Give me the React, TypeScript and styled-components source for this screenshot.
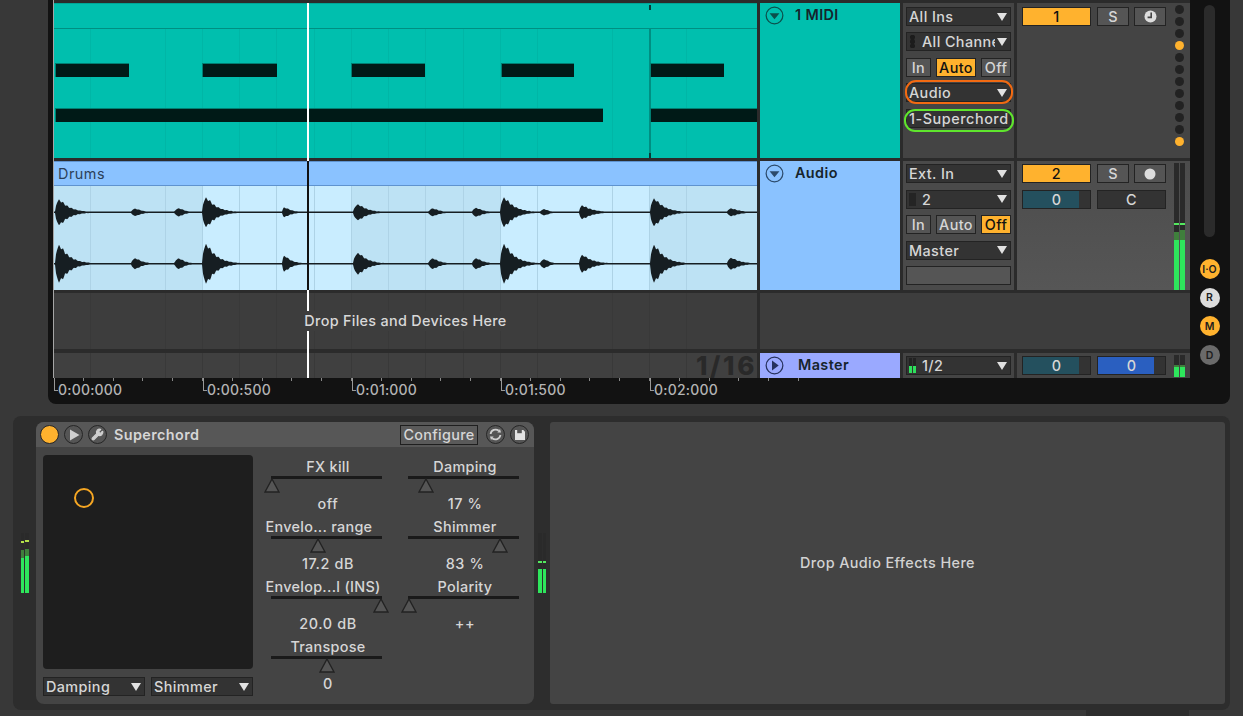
import React from 'react';
import styled, { createGlobalStyle } from 'styled-components';
import { Wrench } from 'lucide-react';

const FONT = '"Inter", "Liberation Sans", sans-serif';
const ORANGE = '#ffb22e';

// x positions are relative to the lane, top/bottom are half heights of the two channels
const HITS = [
  { x: 5, top: 13, bottom: 19, decay: 10, attack: 4 },
  { x: 81, top: 3.8, bottom: 5.5, decay: 7, attack: 4 },
  { x: 124.5, top: 4.2, bottom: 5.5, decay: 6, attack: 4 },
  { x: 152, top: 15, bottom: 20, decay: 10, attack: 4 },
  { x: 230, top: 5, bottom: 8, decay: 7, attack: 2 },
  { x: 304, top: 8, bottom: 11, decay: 9, attack: 5 },
  { x: 378.5, top: 4, bottom: 5.5, decay: 7, attack: 4 },
  { x: 422, top: 4.5, bottom: 5.5, decay: 7, attack: 4 },
  { x: 450, top: 15, bottom: 20, decay: 10, attack: 4 },
  { x: 490, top: 3.2, bottom: 4.5, decay: 5, attack: 4 },
  { x: 528, top: 7, bottom: 9, decay: 10, attack: 3 },
  { x: 600, top: 14, bottom: 19, decay: 10, attack: 4 },
  { x: 677, top: 4, bottom: 6, decay: 9, attack: 4 },
];

const envelope = (x: number, channel: 'top' | 'bottom') => {
  let v = 0.7;
  HITS.forEach((h) => {
    const dx = x - h.x;
    if (dx < -h.attack) return;
    const held = Math.max(0, dx - 2);
    const shape = dx < 0 ? Math.sqrt(1 + dx / h.attack) : Math.exp(-held / h.decay) * (0.88 + 0.12 * Math.cos(dx * 1.5));
    v = Math.max(v, h[channel] * shape);
  });
  return v;
};

const wavePath = (center: number, channel: 'top' | 'bottom') => {
  const up: string[] = [];
  const down: string[] = [];
  for (let x = 0; x <= 703; x += 1) {
    const v = envelope(x, channel);
    up.push(`${x},${(center - v).toFixed(1)}`);
    down.unshift(`${x},${(center + v).toFixed(1)}`);
  }
  return `M${up.join(' L')} L${down.join(' L')} Z`;
};

const GlobalStyle = createGlobalStyle`
  html, body {
    margin: 0;
    padding: 0;
    background: #383838;
    overflow: hidden;
  }
  * {
    box-sizing: border-box;
  }
`;

const Page = styled.div`
  width: 1243px;
  height: 716px;
  background: #383838;
  font-family: ${FONT};
  font-size: 14.4px;
  font-weight: 500;
  letter-spacing: 0.4px;
  color: #d6d6d6;
  overflow: hidden;
  position: relative;
`;

const Frame = styled.div`
  margin-left: 48px;
  width: 1182px;
  height: 404px;
  background: #121212;
  border-radius: 0 0 8px 8px;
  display: flex;
  padding-left: 5px;
`;

const Main = styled.div`
  position: relative;
  width: 1137px;
  display: flex;
  flex-direction: column;
`;

const Tracks = styled.div`
  height: 378px;
  background: #2b2b2b;
  border-left: 1px solid #a5a5a5;
  padding-top: 3px;
  display: flex;
  flex-direction: column;
  gap: 3px;
`;

const Row = styled.div<{ $height: number; $drop?: number }>`
  height: ${(p) => p.$height}px;
  margin-top: ${(p) => p.$drop ?? 0}px;
  display: grid;
  grid-template-columns: 703px 140px 111px 173px;
  column-gap: 3px;
`;

const beatGrid = (color: string) => `repeating-linear-gradient(
  to right,
  transparent 0 36.25px,
  ${color} 36.25px 37.25px
)`;

const MidiClip = styled.div`
  position: relative;
  background: #00bfae;
  display: flex;
  flex-direction: column;
`;

const ClipBar = styled.div`
  height: 26px;
  border-top: 1px solid #00a596;
  border-bottom: 1px solid #008f82;
`;

const PianoRoll = styled.div`
  position: relative;
  flex: 1;
  background-image: ${beatGrid('#00b6a6')};
`;

const BarLine = styled.i`
  position: absolute;
  left: 595px;
  top: 0;
  bottom: 0;
  width: 2px;
  background: #008f82;
`;

const LoopTick = styled.i<{ $top?: boolean }>`
  position: absolute;
  left: 595px;
  width: 2px;
  height: 5px;
  background: #0a3a36;
  ${(p) => (p.$top ? 'top: 2px;' : 'bottom: 0;')}
`;

const Note = styled.div<{ $left: number; $top: number; $width: number }>`
  position: absolute;
  left: ${(p) => p.$left}px;
  top: ${(p) => p.$top}px;
  width: ${(p) => p.$width}px;
  height: 14px;
  background: #001a17;
  border-top: 1px solid #007f72;
  border-left: 1px solid #007f72;
`;

const AudioClip = styled.div`
  background: #8ac2ff;
  display: flex;
  flex-direction: column;
`;

const ClipTitle = styled.div`
  height: 25px;
  border-top: 1px solid #5f93cf;
  border-bottom: 1px solid #5f93cf;
  padding-left: 4px;
  line-height: 23px;
  color: #2c3f58;
  font-weight: 400;
  letter-spacing: 0.5px;
`;

const WaveArea = styled.div`
  flex: 1;
  background-image: ${beatGrid('#aed3e6')},
    repeating-linear-gradient(to right, #bde2f4 0 149px, #c9edff 149px 298px);
  svg {
    display: block;
  }
`;

const EmptyLane = styled.div`
  background-color: #3d3d3d;
  background-image: ${beatGrid('#393939')};
  display: flex;
  align-items: center;
  justify-content: center;
`;

const DropText = styled.span`
  position: relative;
  z-index: 3;
  background: #3d3d3d;
  color: #d8d8d8;
  line-height: 20px;
  letter-spacing: 0.3px;
`;

const EmptyHeader = styled.div`
  grid-column: 2 / 5;
  background: #3d3d3d;
`;

const MasterLane = styled(EmptyLane)`
  background-color: #404040;
  justify-content: flex-end;
`;

const GridLabel = styled.span`
  font-size: 26px;
  font-weight: 800;
  color: #292929;
  letter-spacing: 2.6px;
  line-height: 25px;
`;

const Playhead = styled.div`
  position: absolute;
  left: 254px;
  top: 3px;
  width: 2px;
  height: 375px;
  background: linear-gradient(
    to bottom,
    #fff 0 158px,
    #111 158px 287px,
    #fff 287px
  );
  z-index: 2;
`;

const TrackHead = styled.div<{ $color: string; $nameLeft: number }>`
  background: ${(p) => p.$color};
  display: flex;
  align-items: flex-start;
  gap: ${(p) => p.$nameLeft}px;
  padding: 3px 0 0 5px;
  color: #16242c;
  font-weight: 600;
  line-height: 18px;
  svg {
    flex: none;
  }
`;

const Chain = styled.div<{ $bg?: string; $top?: number; $gap?: number }>`
  background: ${(p) => p.$bg || '#444'};
  display: flex;
  flex-direction: column;
  gap: ${(p) => p.$gap ?? 6.5}px;
  padding: ${(p) => p.$top ?? 3}px 3px 0;
`;

const Box = styled.div`
  height: 19px;
  flex: none;
  background: #333;
  border: 1px solid #232323;
  display: flex;
  align-items: center;
  line-height: 17px;
  padding: 0 3px 0 2px;
  position: relative;
  white-space: nowrap;
`;

const BoxText = styled.span`
  flex: 1;
  overflow: hidden;
  min-width: 0;
`;

const WideText = styled.span`
  letter-spacing: 0.55px;
  margin-right: -3px;
`;

const Caret = styled.i`
  flex: none;
  width: 0;
  height: 0;
  margin-left: 2px;
  border-left: 5px solid transparent;
  border-right: 5px solid transparent;
  border-top: 8px solid #e2e2e2;
`;

const Ring = styled.span<{ $color: string; $inset: string }>`
  position: absolute;
  inset: ${(p) => p.$inset};
  border: 2px solid ${(p) => p.$color};
  border-radius: 11px;
`;

const ChannelSlot = styled.i`
  flex: none;
  width: 7px;
  height: 13px;
  margin-right: 6px;
  background: #242424;
`;

const DotSlot = styled.i`
  flex: none;
  width: 7px;
  height: 13px;
  margin-right: 6px;
  background: radial-gradient(circle, #1c1c1c 2.4px, transparent 2.8px) 0 0 / 7px 4.4px;
`;

const MiniMeter = styled.i`
  flex: none;
  width: 7px;
  height: 15px;
  margin-right: 6px;
  background: linear-gradient(to right, #2ee05c 0 3px, transparent 3px 4px, #2ee05c 4px) 0 100% / 7px 7px no-repeat,
    linear-gradient(to right, #222 0 3px, transparent 3px 4px, #222 4px);
`;

const EmptyBox = styled(Box)`
  background: #555;
`;

const ModeRow = styled.div`
  display: grid;
  grid-template-columns: 25px 40px 30px;
  justify-content: space-between;
  height: 19px;
  flex: none;
`;

const ModeButton = styled.div<{ $on?: boolean }>`
  background: ${(p) => (p.$on ? ORANGE : '#555')};
  color: ${(p) => (p.$on ? '#111' : '#d6d6d6')};
  border: 1px solid #232323;
  text-align: center;
  line-height: 17px;
  white-space: nowrap;
`;

const Mix = styled.div<{ $bg?: string; $top?: number }>`
  background: ${(p) => p.$bg || '#444'};
  display: flex;
  justify-content: space-between;
  padding: ${(p) => p.$top ?? 3}px 5px 0;
`;

const MixControls = styled.div`
  display: grid;
  grid-template-columns: 69px 69px;
  grid-auto-rows: 19px;
  column-gap: 6px;
  row-gap: 7px;
`;

const SoloPair = styled.div`
  display: grid;
  grid-template-columns: 32px 32px;
  justify-content: space-between;
`;

const TrackNumber = styled.div`
  background: ${ORANGE};
  border: 1px solid #232323;
  color: #111;
  text-align: center;
  line-height: 17px;
`;

const SquareButton = styled.div`
  background: #555;
  border: 1px solid #232323;
  display: flex;
  align-items: center;
  justify-content: center;
  line-height: 17px;
`;

const Knob = styled.div<{ $fill: string }>`
  background: linear-gradient(to right, ${(p) => p.$fill} 0 83%, #333 83%);
  border: 1px solid #232323;
  text-align: center;
  line-height: 17px;
`;

const PanBox = styled.div`
  background: #333;
  border: 1px solid #232323;
  text-align: center;
  line-height: 17px;
`;

const Dots = styled.div`
  display: flex;
  flex-direction: column;
  gap: 3px;
  margin-top: -2px;
  margin-right: 1px;
`;

const Dot = styled.i<{ $on?: boolean }>`
  width: 9px;
  height: 9px;
  border-radius: 50%;
  background: ${(p) => (p.$on ? ORANGE : '#222')};
`;

const Meter = styled.div<{ $width: number; $height: number; $offset?: number }>`
  display: flex;
  gap: 1px;
  flex: none;
  width: ${(p) => p.$width}px;
  height: ${(p) => p.$height}px;
  margin-top: ${(p) => p.$offset ?? 0}px;
`;

const MeterBar = styled.i<{ $level: number; $dim: number; $peak: number; $peakColor?: string }>`
  flex: 1;
  background:
    linear-gradient(${(p) => p.$peakColor || '#54e85f'}, ${(p) => p.$peakColor || '#54e85f'}) 0 ${(p) => p.$peak}px / 100% 2px no-repeat,
    linear-gradient(
      to top,
      #2ee65c 0 ${(p) => p.$level}%,
      #3f7f3c ${(p) => p.$level}% ${(p) => p.$dim}%,
      #2a2a2a ${(p) => p.$dim}%
    );
`;

const Side = styled.div`
  flex: 1;
  position: relative;
  display: flex;
  flex-direction: column;
  align-items: center;
  padding: 5px 0 0;
`;

const Scroll = styled.div`
  width: 11px;
  height: 232px;
  margin-left: -1px;
  background: #2b2b2b;
  border-radius: 6px;
`;

const SideButtons = styled.div`
  margin-top: 22px;
  margin-left: -1px;
  display: flex;
  flex-direction: column;
  gap: 8.7px;
`;

const RoundButton = styled.div<{ $bg: string }>`
  width: 20px;
  height: 20px;
  border-radius: 50%;
  background: ${(p) => p.$bg};
  color: #1d1d1d;
  font-size: 10.5px;
  font-weight: 600;
  letter-spacing: 0;
  display: flex;
  align-items: center;
  justify-content: center;
`;

const Ruler = styled.div`
  position: relative;
  flex: 1;
  display: flex;
  padding-left: 1px;
  overflow: hidden;
`;

const RulerCell = styled.div`
  flex: none;
  width: 149px;
  position: relative;
  padding: 3px 0 0 4px;
  color: #b4b4b4;
  font-size: 14px;
  font-weight: 500;
  line-height: 18px;
  letter-spacing: 0.2px;
  background-image: repeating-linear-gradient(
    to right,
    transparent 0 28.8px,
    #888 28.8px 29.8px
  );
  background-size: 100% 3px;
  background-repeat: no-repeat;
  &::before {
    content: '';
    position: absolute;
    left: 0;
    top: 0;
    width: 3px;
    height: 12px;
    border-left: 1px solid #999;
    border-bottom: 1px solid #999;
  }
`;

const Devices = styled.div`
  margin: 12px 0 0 13px;
  width: 1217px;
  height: 294px;
  background: #2d2d2d;
  border-radius: 8px;
  display: flex;
  padding: 6px 5px 6px 0;
`;

const ScrollTab = styled.div`
  margin-left: 1086px;
  width: 103px;
  height: 6px;
  background: #2d2d2d;
`;

const MeterGutter = styled.div<{ $width: number }>`
  flex: none;
  width: ${(p) => p.$width}px;
  display: flex;
  justify-content: center;
  padding-top: 111px;
`;

const Device = styled.div`
  flex: none;
  width: 498px;
  background: #444;
  border-radius: 8px;
  display: flex;
  flex-direction: column;
  overflow: hidden;
`;

const TitleBar = styled.div`
  height: 25px;
  flex: none;
  background: #575757;
  display: flex;
  align-items: center;
  padding-left: 4px;
`;

const TitleText = styled.span`
  flex: 1;
  margin-left: 2px;
  font-weight: 600;
`;

const TitleButton = styled.div<{ $bg?: string }>`
  width: 19px;
  height: 19px;
  margin-right: 5px;
  border-radius: 50%;
  background: ${(p) => p.$bg || '#555'};
  border: 1.5px solid #262626;
  display: flex;
  align-items: center;
  justify-content: center;
  flex: none;
`;

const ConfigureButton = styled.div`
  height: 20px;
  margin-right: 8px;
  background: #5a5a5a;
  border: 1px solid #1f1f1f;
  line-height: 18px;
  width: 78px;
  text-align: center;
  letter-spacing: 0.3px;
`;

const DeviceBody = styled.div`
  flex: 1;
  display: flex;
  padding: 8px 0 0 7px;
`;

const PadColumn = styled.div`
  flex: none;
  width: 210px;
  display: flex;
  flex-direction: column;
  gap: 8px;
`;

const Pad = styled.div`
  height: 214px;
  background: #1e1e1e;
  border-radius: 4px;
  position: relative;
`;

const PadHandle = styled.i`
  position: absolute;
  left: 31px;
  top: 33px;
  width: 20px;
  height: 20px;
  border: 2px solid #f5a623;
  border-radius: 50%;
`;

const PadSelects = styled.div`
  display: grid;
  grid-template-columns: 102px 102px;
  justify-content: space-between;
`;

const Params = styled.div`
  margin-left: 18px;
  display: grid;
  grid-template-columns: 111px 111px;
  column-gap: 26px;
  grid-auto-rows: 60px;
  align-content: start;
`;

const Param = styled.div`
  display: flex;
  flex-direction: column;
  height: 60px;
`;

const ParamLabel = styled.div<{ $long?: boolean }>`
  height: 21px;
  line-height: 24px;
  white-space: nowrap;
  width: 125px;
  margin-left: -5.5px;
  text-align: ${(p) => (p.$long ? 'left' : 'center')};
  letter-spacing: 0.3px;
`;

const Track = styled.div`
  height: 3px;
  background: #1a1a1a;
  position: relative;
  flex: none;
`;

const Thumb = styled.svg<{ $pos: number }>`
  position: absolute;
  top: 2px;
  left: ${(p) => p.$pos - 8}px;
`;

const ParamValue = styled.div`
  margin-top: 16px;
  line-height: 18px;
  height: 18px;
  width: 125px;
  margin-left: -5.5px;
  text-align: center;
  letter-spacing: 0.6px;
`;

const DropPanel = styled.div`
  flex: 1;
  background: #444;
  border-radius: 3px;
  display: flex;
  align-items: center;
  justify-content: center;
  padding-bottom: 1px;
  color: #d2d2d2;
`;

const FoldIcon = ({ open, color }: { open: boolean; color: string }) => (
  <svg width="19" height="19" viewBox="0 0 20 20">
    <circle cx="10" cy="10" r="8.8" fill="none" stroke={color} strokeWidth="1.3" />
    {open ? (
      <polygon points="4.8,7.6 15.2,7.6 10,14" fill={color} />
    ) : (
      <polygon points="7.4,4.8 7.4,15.2 14.4,10" fill={color} />
    )}
  </svg>
);

const Select = ({ label, left }: { label: string; left?: React.ReactNode }) => (
  <Box>
    {left}
    <BoxText>{label}</BoxText>
    <Caret />
  </Box>
);

const Modes = ({ on }: { on: 'Auto' | 'Off' }) => (
  <ModeRow>
    <ModeButton>In</ModeButton>
    <ModeButton $on={on === 'Auto'}>Auto</ModeButton>
    <ModeButton $on={on === 'Off'}>Off</ModeButton>
  </ModeRow>
);

const PARAMS = [
  { label: 'FX kill', pos: 0.5, value: 'off' },
  { label: 'Damping', pos: 18.3, value: '17 %' },
  { label: 'Envelo... range', pos: 47, value: '17.2 dB', long: true },
  { label: 'Shimmer', pos: 91.5, value: '83 %' },
  { label: 'Envelop...l (INS)', pos: 110, value: '20.0 dB', long: true },
  { label: 'Polarity', pos: 0.5, value: '++' },
  { label: 'Transpose', pos: 56, value: '0' },
];

const NOTES = [
  { left: 1, top: 34, width: 74 },
  { left: 148, top: 34, width: 75 },
  { left: 297, top: 34, width: 74 },
  { left: 447, top: 34, width: 73 },
  { left: 596, top: 34, width: 74 },
  { left: 1, top: 79, width: 548 },
  { left: 596, top: 79, width: 107 },
];

const RULER = ['0:00:000', '0:00:500', '0:01:000', '0:01:500', '0:02:000'];

export default function App() {
  return (
    <Page>
      <GlobalStyle />
      <Frame>
        <Main>
          <Tracks>
            <Row $height={155}>
              <MidiClip>
                <ClipBar />
                <PianoRoll>
                  <BarLine />
                  {NOTES.map((n) => (
                    <Note key={`${n.left}-${n.top}`} $left={n.left} $top={n.top} $width={n.width} />
                  ))}
                </PianoRoll>
                <LoopTick $top />
                <LoopTick />
              </MidiClip>
              <TrackHead $color="#00bfae" $nameLeft={11}>
                <FoldIcon open color="#0b4f4b" />
                <span>1 MIDI</span>
              </TrackHead>
              <Chain $top={4} $gap={6.4}>
                <Select label="All Ins" />
                <Select label="All Channels" left={<DotSlot />} />
                <Modes on="Auto" />
                <Box>
                  <Ring $color="#f26a12" $inset="-4px -3px -3px -2px" />
                  <BoxText>Audio</BoxText>
                  <Caret />
                </Box>
                <Box>
                  <Ring $color="#5fe62d" $inset="-1px -4px -5px -3px" />
                  <WideText>1-Superchord</WideText>
                </Box>
              </Chain>
              <Mix $top={4}>
                <MixControls>
                  <TrackNumber>1</TrackNumber>
                  <SoloPair>
                    <SquareButton>S</SquareButton>
                    <SquareButton>
                      <svg width="13" height="13" viewBox="0 0 13 13">
                        <circle cx="6.5" cy="6.5" r="6" fill="#ddd" />
                        <path d="M7.2 2.5 V7.4 H3.6" fill="none" stroke="#444" strokeWidth="1.6" />
                      </svg>
                    </SquareButton>
                  </SoloPair>
                </MixControls>
                <Dots>
                  {Array.from({ length: 12 }).map((_, i) => (
                    <Dot key={i} $on={i === 3 || i === 11} />
                  ))}
                </Dots>
              </Mix>
            </Row>
            <Row $height={129}>
              <AudioClip>
                <ClipTitle>Drums</ClipTitle>
                <WaveArea>
                  <svg width="703" height="104" viewBox="0 0 703 104">
                    <path d={wavePath(26.3, 'top')} fill="#161e22" />
                    <path d={wavePath(77.7, 'bottom')} fill="#161e22" />
                  </svg>
                </WaveArea>
              </AudioClip>
              <TrackHead $color="#8ac2ff" $nameLeft={11}>
                <FoldIcon open color="#2c4a6b" />
                <span>Audio</span>
              </TrackHead>
              <Chain $bg="#4a4a4a">
                <Select label="Ext. In" />
                <Select label="2" left={<ChannelSlot />} />
                <Modes on="Off" />
                <Select label="Master" />
                <EmptyBox />
              </Chain>
              <Mix $bg="linear-gradient(to bottom, #4c4c4c, #565656)">
                <MixControls>
                  <TrackNumber>2</TrackNumber>
                  <SoloPair>
                    <SquareButton>S</SquareButton>
                    <SquareButton>
                      <svg width="12" height="12" viewBox="0 0 12 12">
                        <circle cx="6" cy="6" r="5.5" fill="#ddd" />
                      </svg>
                    </SquareButton>
                  </SoloPair>
                  <Knob $fill="#24505e">0</Knob>
                  <PanBox>C</PanBox>
                </MixControls>
                <Meter $width={11} $height={127} $offset={-1}>
                  <MeterBar $level={39} $dim={46} $peak={60} />
                  <MeterBar $level={39} $dim={47} $peak={60} />
                </Meter>
              </Mix>
            </Row>
            <Row $height={56}>
              <EmptyLane>
                <DropText>Drop Files and Devices Here</DropText>
              </EmptyLane>
              <EmptyHeader />
            </Row>
            <Row $height={25} $drop={1}>
              <MasterLane>
                <GridLabel>1/16</GridLabel>
              </MasterLane>
              <TrackHead $color="#9aa9ff" $nameLeft={14}>
                <FoldIcon open={false} color="#26315e" />
                <span>Master</span>
              </TrackHead>
              <Chain>
                <Select label="1/2" left={<MiniMeter />} />
              </Chain>
              <Mix>
                <MixControls>
                  <Knob $fill="#24505e">0</Knob>
                  <Knob $fill="#2a5fc0">0</Knob>
                </MixControls>
                <Meter $width={11} $height={22} $offset={-1}>
                  <MeterBar $level={45} $dim={55} $peak={10} $peakColor="#3f7f3c" />
                  <MeterBar $level={45} $dim={55} $peak={10} $peakColor="#3f7f3c" />
                </Meter>
              </Mix>
            </Row>
          </Tracks>
          <Ruler>
            {RULER.map((t) => (
              <RulerCell key={t}>{t}</RulerCell>
            ))}
          </Ruler>
          <Playhead />
        </Main>
        <Side>
          <Scroll />
          <SideButtons>
            <RoundButton $bg={ORANGE}>I·O</RoundButton>
            <RoundButton $bg="#dcdcdc">R</RoundButton>
            <RoundButton $bg={ORANGE}>M</RoundButton>
            <RoundButton $bg="#6a6a6a">D</RoundButton>
          </SideButtons>
        </Side>
      </Frame>
      <Devices>
        <MeterGutter $width={23}>
          <Meter $width={8} $height={60}>
            <MeterBar $level={58} $dim={72} $peak={8} $peakColor="#b4e04a" />
            <MeterBar $level={62} $dim={74} $peak={7} $peakColor="#b4e04a" />
          </Meter>
        </MeterGutter>
        <Device>
          <TitleBar>
            <TitleButton $bg={ORANGE} />
            <TitleButton>
              <svg width="12" height="12" viewBox="0 0 12 12">
                <polygon points="2,0.5 2,11.5 11.5,6" fill="#d0d0d0" />
              </svg>
            </TitleButton>
            <TitleButton>
              <Wrench size={13} color="#d0d0d0" fill="#d0d0d0" strokeWidth={2} />
            </TitleButton>
            <TitleText>Superchord</TitleText>
            <ConfigureButton>Configure</ConfigureButton>
            <TitleButton>
              <svg width="13" height="13" viewBox="0 0 13 13" fill="none" stroke="#d0d0d0" strokeWidth="1.8">
                <path d="M1.6 6 A5 5 0 0 1 9.8 2.8" />
                <path d="M11.4 7 A5 5 0 0 1 3.2 10.2" />
                <polygon points="8.4,4.6 12,4.6 11,0.9" fill="#d0d0d0" stroke="none" />
                <polygon points="4.6,8.4 1,8.4 2,12.1" fill="#d0d0d0" stroke="none" />
              </svg>
            </TitleButton>
            <TitleButton>
              <svg width="12" height="12" viewBox="0 0 12 12">
                <path d="M1 1 H9.3 L11 2.7 V11 H1 Z" fill="#e2e2e2" />
                <rect x="3.2" y="1" width="4.6" height="3.2" fill="#555" />
              </svg>
            </TitleButton>
          </TitleBar>
          <DeviceBody>
            <PadColumn>
              <Pad>
                <PadHandle />
              </Pad>
              <PadSelects>
                <Select label="Damping" />
                <Select label="Shimmer" />
              </PadSelects>
            </PadColumn>
            <Params>
              {PARAMS.map((p) => (
                <Param key={p.label}>
                  <ParamLabel $long={p.long}>{p.label}</ParamLabel>
                  <Track>
                    <Thumb $pos={p.pos} width="16" height="15" viewBox="0 0 16 15">
                      <polygon points="8,1 15,14 1,14" fill="#555" stroke="#222" strokeWidth="1.4" />
                    </Thumb>
                  </Track>
                  <ParamValue>{p.value}</ParamValue>
                </Param>
              ))}
            </Params>
          </DeviceBody>
        </Device>
        <MeterGutter $width={16}>
          <Meter $width={8} $height={60}>
            <MeterBar $level={40} $dim={40} $peak={28} />
            <MeterBar $level={40} $dim={40} $peak={28} />
          </Meter>
        </MeterGutter>
        <DropPanel>Drop Audio Effects Here</DropPanel>
      </Devices>
      <ScrollTab />
    </Page>
  );
}
